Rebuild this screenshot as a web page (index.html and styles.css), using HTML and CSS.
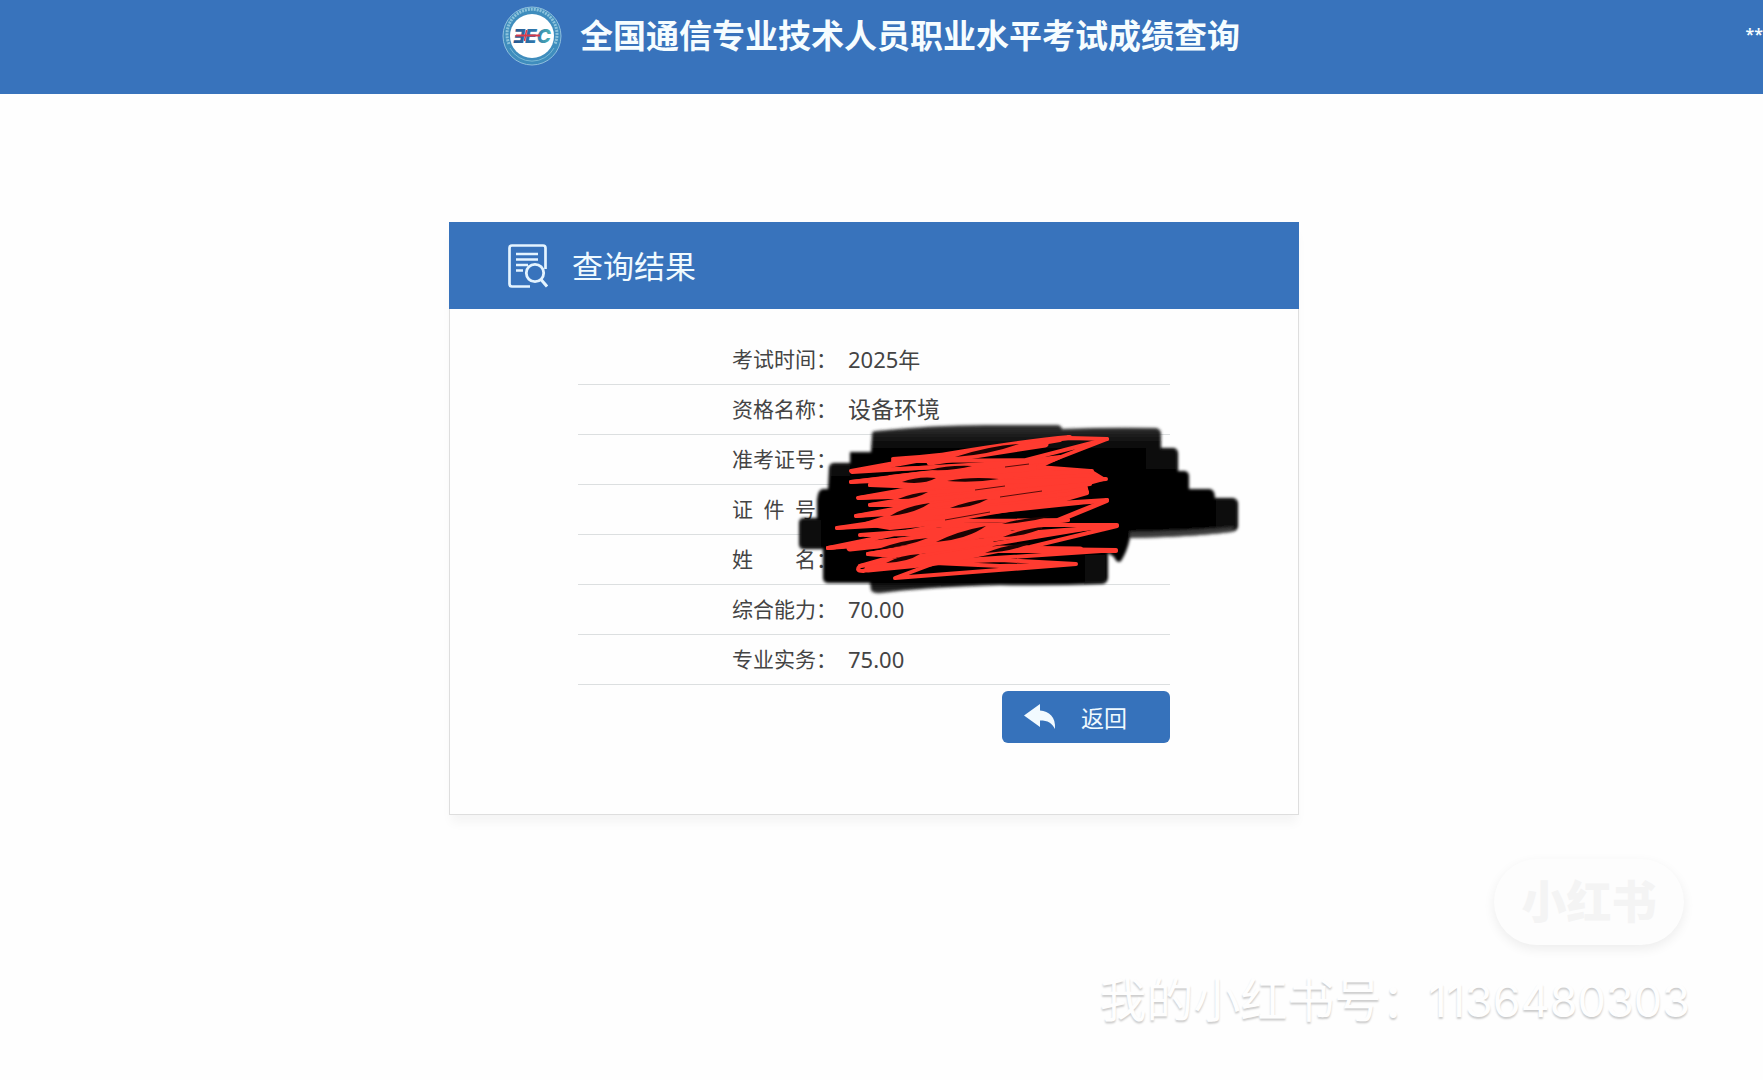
FILE: index.html
```html
<!DOCTYPE html>
<html lang="zh-CN">
<head>
<meta charset="utf-8">
<meta name="viewport" content="width=device-width, initial-scale=1">
<title>全国通信专业技术人员职业水平考试成绩查询</title>
<link rel="stylesheet" href="styles.css">
</head>
<body>
<header class="topbar">
  <div class="brand">
    <svg class="logo" viewBox="0 0 60 60" aria-hidden="true">
      <defs>
        <linearGradient id="letters" x1="0" x2="1" y1="0" y2="0">
          <stop offset="0" stop-color="#28578f"/>
          <stop offset="0.55" stop-color="#2f78ad"/>
          <stop offset="1" stop-color="#4fb3b4"/>
        </linearGradient>
      </defs>
      <circle cx="30" cy="30" r="29" fill="#3f8dbd" stroke="#8fbfdd" stroke-width="1"/>
      <path d="M7 38a25 25 0 1 1 46 0" fill="none" stroke="#8cc3dc" stroke-width="3" stroke-dasharray="2 1"/>
      <path d="M8 42a25 25 0 0 0 44 0" fill="none" stroke="#7ab9d6" stroke-width="1"/>
      <circle cx="30" cy="30" r="22" fill="#fff"/>
      <text class="logo-text" x="30" y="37" text-anchor="middle" fill="url(#letters)">ƎEC</text>
      <path d="M14 29.500h24" stroke="#d83a4a" stroke-width="2"/>
      <path d="M24.500 24l-2 11" stroke="#d83a4a" stroke-width="1.500"/>
    </svg>
    <h1 class="brand-title">全国通信专业技术人员职业水平考试成绩查询</h1>
  </div>
  <span class="user">**</span>
</header>

<main class="page">
  <section class="card">
    <header class="card-head">
      <svg class="card-icon" viewBox="0 0 40 44" fill="none" stroke="#e4f4ff" aria-hidden="true">
        <path d="M22 42.500H4a2.500 2.500 0 0 1-2.500-2.500V4A2.500 2.500 0 0 1 4 1.500h31A2.500 2.500 0 0 1 37.500 4v21" stroke-width="2.700"/>
        <path d="M8 10h22M8 15.500h22M8 21h12M8 26.500h7" stroke-width="2.500"/>
        <circle cx="27" cy="29" r="8.700" stroke-width="2.800"/>
        <path d="M33 35.500l6 7" stroke-width="3"/>
      </svg>
      <h2 class="card-title">查询结果</h2>
    </header>
    <div class="card-body">
      <table class="result">
        <tbody>
          <tr><th scope="row"><span class="label">考试时间</span>：</th><td class="num">2025年</td></tr>
          <tr><th scope="row"><span class="label">资格名称</span>：</th><td>设备环境</td></tr>
          <tr><th scope="row"><span class="label">准考证号</span>：</th><td></td></tr>
          <tr><th scope="row"><span class="label">证 件 号</span>：</th><td></td></tr>
          <tr><th scope="row"><span class="label">姓 名</span>：</th><td></td></tr>
          <tr><th scope="row"><span class="label">综合能力</span>：</th><td class="num">70.00</td></tr>
          <tr><th scope="row"><span class="label">专业实务</span>：</th><td class="num">75.00</td></tr>
        </tbody>
      </table>
      <div class="actions">
        <button class="back" type="button">
          <svg class="back-icon" viewBox="0 0 32 26" aria-hidden="true"><path d="M0 11.500L16 0v6.500C25 7 32 13 31 25c-3-6-7-8.500-15-8.500V23z" fill="#f2faff"/></svg>
          返回
        </button>
      </div>
    </div>

    <svg class="redaction" viewBox="790 414 460 186" aria-hidden="true">
      <defs>
        <filter id="soft" x="-5%" y="-5%" width="110%" height="110%"><feGaussianBlur stdDeviation="1.500"/></filter>
        <linearGradient id="edge" x1="0" x2="0" y1="0" y2="1">
          <stop offset="0" stop-color="#333"/><stop offset="0.100" stop-color="#101010"/><stop offset="0.160" stop-color="#000"/>
          <stop offset="0.930" stop-color="#000"/><stop offset="1" stop-color="#333"/>
        </linearGradient>
      </defs>
      <g filter="url(#soft)">
        <path fill="url(#edge)" d="M872 434Q872 431 876 431Q940 424 1000 425L1058 425Q1062 426 1062 429Q1110 427 1156 428Q1161 429 1161 434V448H1174Q1178 449 1178 454V471H1185Q1189 472 1189 476V489H1210Q1215 490 1215 498H1233Q1238 499 1238 504V526Q1238 531 1231 532Q1190 537 1130 538Q1127 552 1121 561Q1117 564 1114 557L1108 553V578Q1107 584 1101 584Q1050 586 1000 585Q930 587 890 592Q872 595 871 590L870 583H829Q823 583 823 578V549H804Q799 549 799 544V523Q799 518 804 518H817V500Q818 489 823 489H828L829 469Q829 463 834 463H850V452H871Z"/>
        <path fill="#0e0e0e" d="M801 520h20v27h-20zM831 465h19v11h-19zM1146 450h30v19h-30zM1216 500h20v28h-20zM1085 555h20v26h-20z"/>
        <path fill="#555" opacity="0.700" d="M1130 532Q1190 531 1234 527L1232 532Q1190 537 1130 538z"/>
      </g>
      <g fill="none" stroke="#ff3b30" stroke-width="4" stroke-linecap="round" stroke-linejoin="round">
        <path fill="#ff3b30" d="M890 477L1060 457L1038 467L1090 471L1103 479L1085 484L1087 493L1052 503L990 513L930 524L890 528L866 524L912 509L902 501L922 491L900 486z"/>
        <path d="M893 459Q960 455 1070 437Q1000 443 851 471L1010 464L1107 439L1053 460L893 461L1060 440L930 462"/>
        <path d="M1107 439L1070 438Q990 447 900 464L852 472L1053 460L851 482L1092 471L870 485L1106 479L859 498L1050 470"/>
        <path d="M851 482L925 473L870 485L920 487L858 498L925 496L870 505L915 505L856 516L960 505L1087 492"/>
        <path d="M870 505L1090 484L856 516L1107 500L837 528L960 510L1107 501L1056 522L860 535L1068 520L828 548"/>
        <path d="M1107 500L1050 523L985 540M837 528L960 521L1068 520L828 548L940 525L1117 525L868 554L1010 532L865 535"/>
        <path d="M828 548L895 543L1117 526L1030 547L940 557L868 554L960 538L1090 528L860 566L990 549L1116 551L918 551"/>
        <path d="M868 554L895 556L860 566Q855 571 863 571L960 548L1116 550L920 563L1000 560L1076 564L895 578L935 563L1000 566L1076 564"/>
        <path stroke-width="7" d="M930 462L1045 444M850 548L1000 532L930 533L1040 525M868 569L930 563L1000 549L1080 550M895 554L990 541M990 549L900 564"/>
      </g>
      <g fill="#1c0403">
        <path d="M902 482q16-6 34-4q-12 7-34 4zM947 481q24-5 52-2q-24 4-52 2zM930 470q18-5 42-4q-18 5-42 4zM890 516q16-10 40-13q-14 10-40 13zM898 499q14-6 30-7q-14 8-30 7zM950 508q18-7 38-9q-16 9-38 9zM878 549q24-9 50-11q-22 9-50 11zM936 542q22-11 50-16q-18 13-50 16zM985 553q22-9 46-10q-20 9-46 10zM1003 537q22-9 42-10q-18 9-42 10zM955 457q34-11 64-13q-30 11-64 13zM1002 524q24-7 50-8q-24 7-50 8zM886 563q14-8 34-9q-12 8-34 9z"/>
      </g>
      <path fill="none" stroke="#5a0d0a" stroke-width="1" d="M975 490l30-4M1000 497l42-6M1005 467l24-3M945 520l45-8"/>
    </svg>
  </section>
</main>

<aside class="watermark">
  <span class="watermark-pill">小红书</span>
  <span class="watermark-id">我的小红书号：<span class="watermark-num">1136480303</span></span>
</aside>
</body>
</html>
```

FILE: styles.css
```css
* { box-sizing: border-box; }

body {
  position: relative;
  min-height: 100vh;
  margin: 0;
  overflow-x: hidden;
  background: #fefefe;
  color: #444;
  font-family: "Noto Sans", "Noto Sans CJK SC", sans-serif;
}

h1, h2 { margin: 0; }

.topbar {
  display: grid;
  grid-template-columns: 1fr minmax(0, 745px) 1fr;
  height: 94px;
  padding: 6px 0 0;
  background: #3873bc;
  color: #f6fdff;
}

.brand {
  display: flex;
  grid-column: 2;
  align-items: center;
  gap: 18px;
  height: 60px;
  margin-left: -7px;
}

.logo { flex: none; width: 60px; height: 60px; }

.logo-text {
  font: italic 800 19px Inter, sans-serif;
}

.brand-title {
  font-size: 33px;
  font-weight: 700;
  line-height: 62px;
  white-space: nowrap;
}

.user {
  justify-self: end;
  font-size: 16px;
  font-weight: 600;
  line-height: 56px;
  white-space: nowrap;
}

.page { padding: 128px 15px 60px 0; }

.card {
  position: relative;
  max-width: 850px;
  margin: 0 auto;
  border: 1px solid #dedede;
  border-top: 0;
  background: #fefefe;
  box-shadow: 0 10px 10px -2px rgba(0, 0, 0, 0.04);
}

.card-head {
  display: flex;
  align-items: center;
  gap: 24px;
  height: 87px;
  margin: 0 -1px;
  padding-left: 59px;
  background: #3873bc;
  color: #f0faff;
}

.card-icon { width: 40px; height: 44px; }

.card-title { font-size: 31px; font-weight: 400; line-height: 40px; }

.card-body {
  max-width: 592px;
  margin: 0 auto;
  padding: 25px 0 71px;
}

.result {
  width: 100%;
  border-collapse: collapse;
  table-layout: fixed;
}

.result th,
.result td {
  height: 50px;
  padding: 0;
  border-bottom: 1px solid #dcdfe0;
  font-weight: 400;
  line-height: 30px;
  text-align: left;
}

.result th {
  width: 270px;
  padding-left: 154px;
  font-size: 21px;
  white-space: nowrap;
}

.result td { font-size: 23px; }
.result .num { font-size: 22px; }

.label {
  display: inline-block;
  width: 84px;
  text-align: justify;
  text-align-last: justify;
}

.actions { display: flex; justify-content: flex-end; padding-top: 6px; }

.back {
  display: flex;
  align-items: center;
  gap: 25px;
  width: 168px;
  height: 52px;
  padding: 0 0 0 22px;
  border: 0;
  border-radius: 6px;
  background: #3672bb;
  color: #f0faff;
  font: 400 23px "Noto Sans", "Noto Sans CJK SC", sans-serif;
  cursor: pointer;
}

.back-icon { width: 32px; height: 26px; }

.redaction {
  position: absolute;
  top: 192px;
  left: 340px;
  width: 460px;
  height: 186px;
  pointer-events: none;
}

.watermark {
  position: absolute;
  right: 73px;
  bottom: 47px;
  display: flex;
  flex-direction: column;
  align-items: flex-end;
  gap: 22px;
  pointer-events: none;
}

.watermark-pill {
  width: 190px;
  height: 86px;
  margin-right: 6px;
  border-radius: 43px;
  background: #fdfdfd;
  box-shadow: 0 4px 12px rgba(0, 0, 0, 0.07);
  color: #f4f4f4;
  font-size: 45px;
  font-weight: 900;
  line-height: 86px;
  text-align: center;
}

.watermark-id {
  color: #fefefe;
  font-size: 47px;
  line-height: 64px;
  text-shadow: 0 2px 2px rgba(0, 0, 0, 0.2);
  white-space: nowrap;
}

.watermark-num { font-family: Inter, sans-serif; font-size: 45px; }
```
